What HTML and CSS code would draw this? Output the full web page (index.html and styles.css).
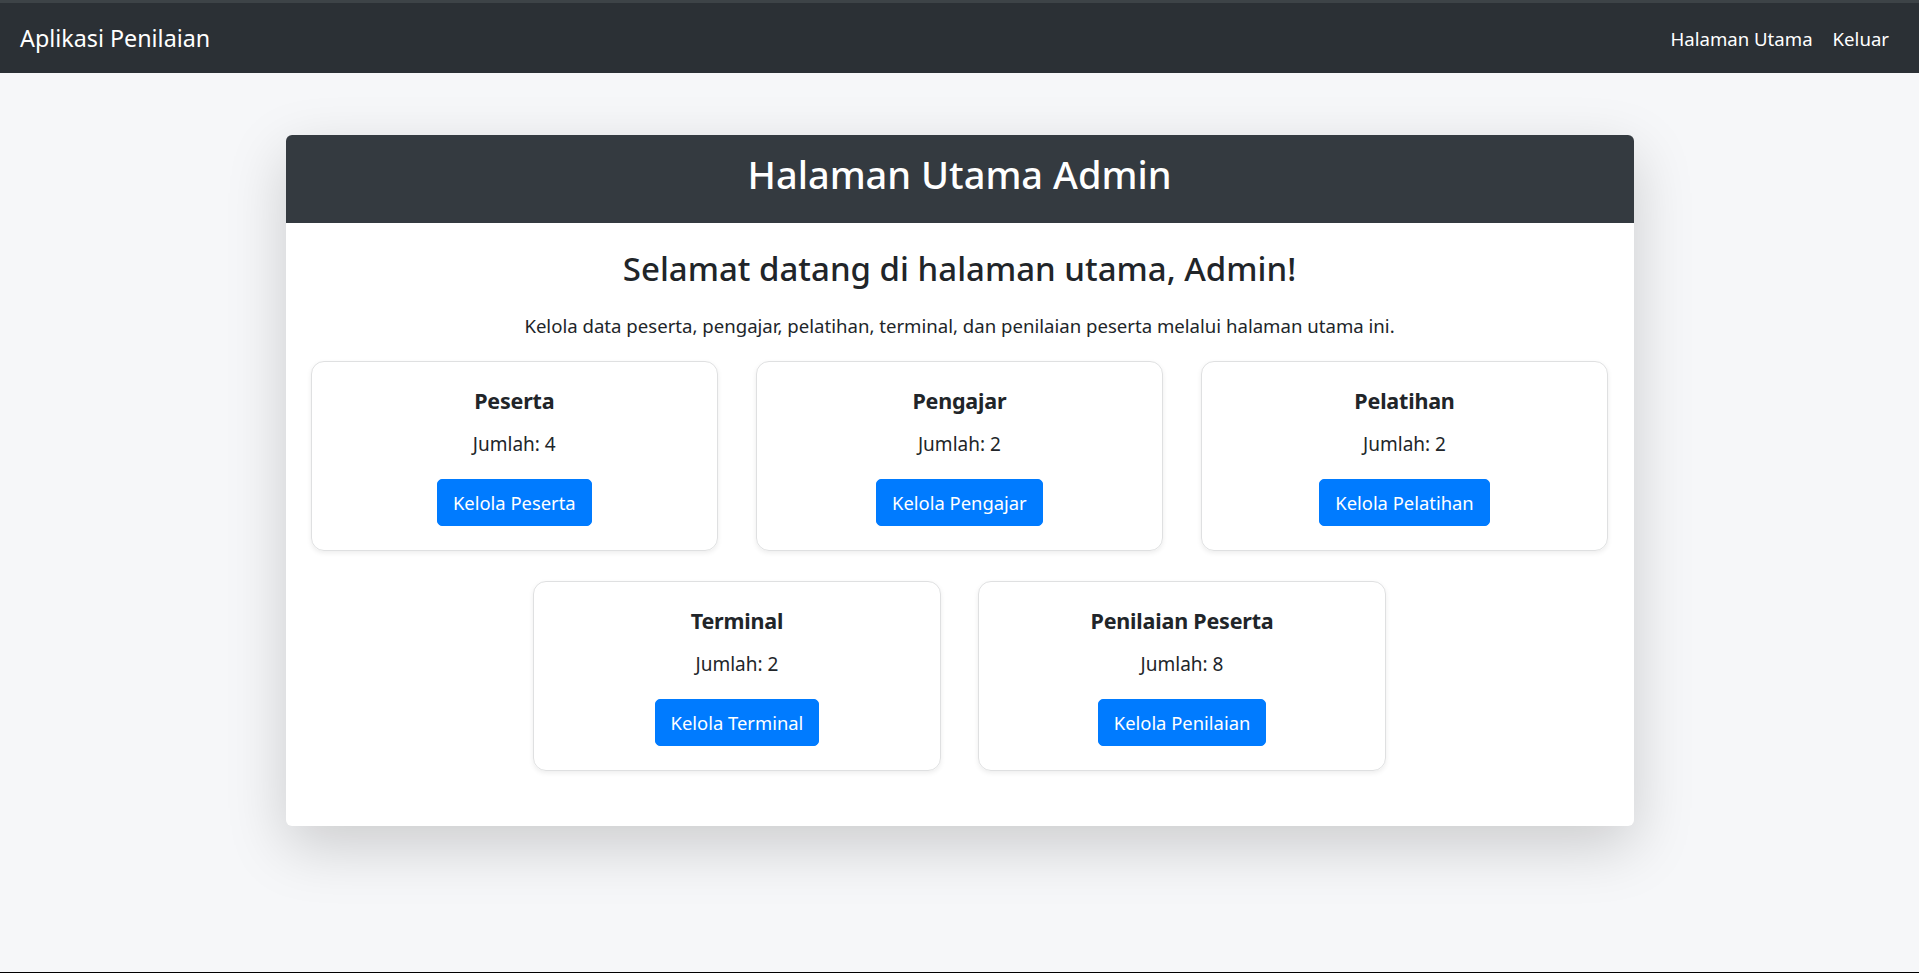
FILE: index.html
```html
<!DOCTYPE html>
<html lang="id">
<head>
<meta charset="utf-8">
<title>Aplikasi Penilaian</title>
<link rel="stylesheet" href="styles.css">
</head>
<body>
<nav class="navbar">
  <a class="brand" href="#">Aplikasi Penilaian</a>
  <ul class="nav">
    <li><a class="nav-link" href="#">Halaman Utama</a></li>
    <li><a class="nav-link" href="#">Keluar</a></li>
  </ul>
</nav>
<main class="page">
  <section class="main-card">
    <header class="main-card-header">
      <h2>Halaman Utama Admin</h2>
    </header>
    <div class="main-card-body">
      <h3 class="welcome">Selamat datang di halaman utama, Admin!</h3>
      <p class="lead-text">Kelola data peserta, pengajar, pelatihan, terminal, dan penilaian peserta melalui halaman utama ini.</p>
      <div class="row">
        <div class="tile">
          <h5 class="tile-title">Peserta</h5>
          <p class="tile-count">Jumlah: 4</p>
          <a class="btn" href="#">Kelola Peserta</a>
        </div>
        <div class="tile">
          <h5 class="tile-title">Pengajar</h5>
          <p class="tile-count">Jumlah: 2</p>
          <a class="btn" href="#">Kelola Pengajar</a>
        </div>
        <div class="tile">
          <h5 class="tile-title">Pelatihan</h5>
          <p class="tile-count">Jumlah: 2</p>
          <a class="btn" href="#">Kelola Pelatihan</a>
        </div>
      </div>
      <div class="row row-center">
        <div class="tile">
          <h5 class="tile-title">Terminal</h5>
          <p class="tile-count">Jumlah: 2</p>
          <a class="btn" href="#">Kelola Terminal</a>
        </div>
        <div class="tile">
          <h5 class="tile-title">Penilaian Peserta</h5>
          <p class="tile-count">Jumlah: 8</p>
          <a class="btn" href="#">Kelola Penilaian</a>
        </div>
      </div>
    </div>
  </section>
</main>
</body>
</html>
```
FILE: styles.css
```css
* { box-sizing: border-box; }
html, body { height: 100%; }
body {
  margin: 0;
  background: #f6f7f9;
  color: #212529;
  font-family: "Noto Sans", "Open Sans", sans-serif;
  font-size: 20px;
  line-height: 1.5;
  border-bottom: 1px solid #000;
}
a { text-decoration: none; }

.navbar {
  display: flex;
  align-items: center;
  justify-content: space-between;
  height: 73px;
  border-top: 3px solid #3d4347;
  background: #2b3035;
  padding: 0 20px;
}
.brand {
  color: #fff;
  font-size: 23.3px;
  line-height: 37px;
}
.nav {
  display: flex;
  list-style: none;
  margin: 0;
  padding: 2px 0 0;
}
.nav-link {
  display: block;
  color: #fff;
  font-size: 18.6px;
  padding: 0 10px;
  line-height: 30px;
}

.page {
  padding-top: 62px;
}
.main-card {
  width: 1348px;
  margin: 0 auto;
  background: #fff;
  border-radius: 6px;
  box-shadow: 0 20px 60px rgba(0, 0, 0, 0.175);
  overflow: hidden;
}
.main-card-header {
  background: #343a40;
  color: #fff;
  padding: 15px 20px 15px;
  height: 88px;
  text-align: center;
}
.main-card-header h2 {
  margin: 0;
  font-size: 38px;
  font-weight: 500;
  line-height: 48px;
}
.main-card-body {
  padding: 25px 25px 25px;
  text-align: center;
}
.welcome {
  margin: 0 0 21px;
  font-size: 33px;
  font-weight: 500;
  line-height: 42px;
}
.lead-text {
  margin: 0 0 20px;
  font-size: 18.6px;
  line-height: 30px;
}
.row {
  display: flex;
  gap: 37.5px;
  margin-bottom: 30px;
}
.row:last-child { margin-bottom: 30px; }
.row-center { justify-content: center; }
.tile {
  flex: 0 0 407.6px;
  border: 1px solid #dfe0e1;
  border-radius: 13px;
  box-shadow: 0 2px 5px rgba(0, 0, 0, 0.075);
  padding: 24px 25px 24px;
  display: flex;
  flex-direction: column;
  align-items: center;
}
.tile-title {
  margin: 0 0 13px;
  font-size: 21.5px;
  font-weight: 700;
  line-height: 30px;
  letter-spacing: -0.2px;
}
.tile-count {
  margin: 0 0 20px;
  font-size: 19px;
  line-height: 30px;
}
.btn {
  display: inline-block;
  background: #007bff;
  border: 1px solid #007bff;
  color: #fff;
  font-size: 18.4px;
  line-height: 30px;
  padding: 7.5px 15px;
  border-radius: 5px;
}
```
